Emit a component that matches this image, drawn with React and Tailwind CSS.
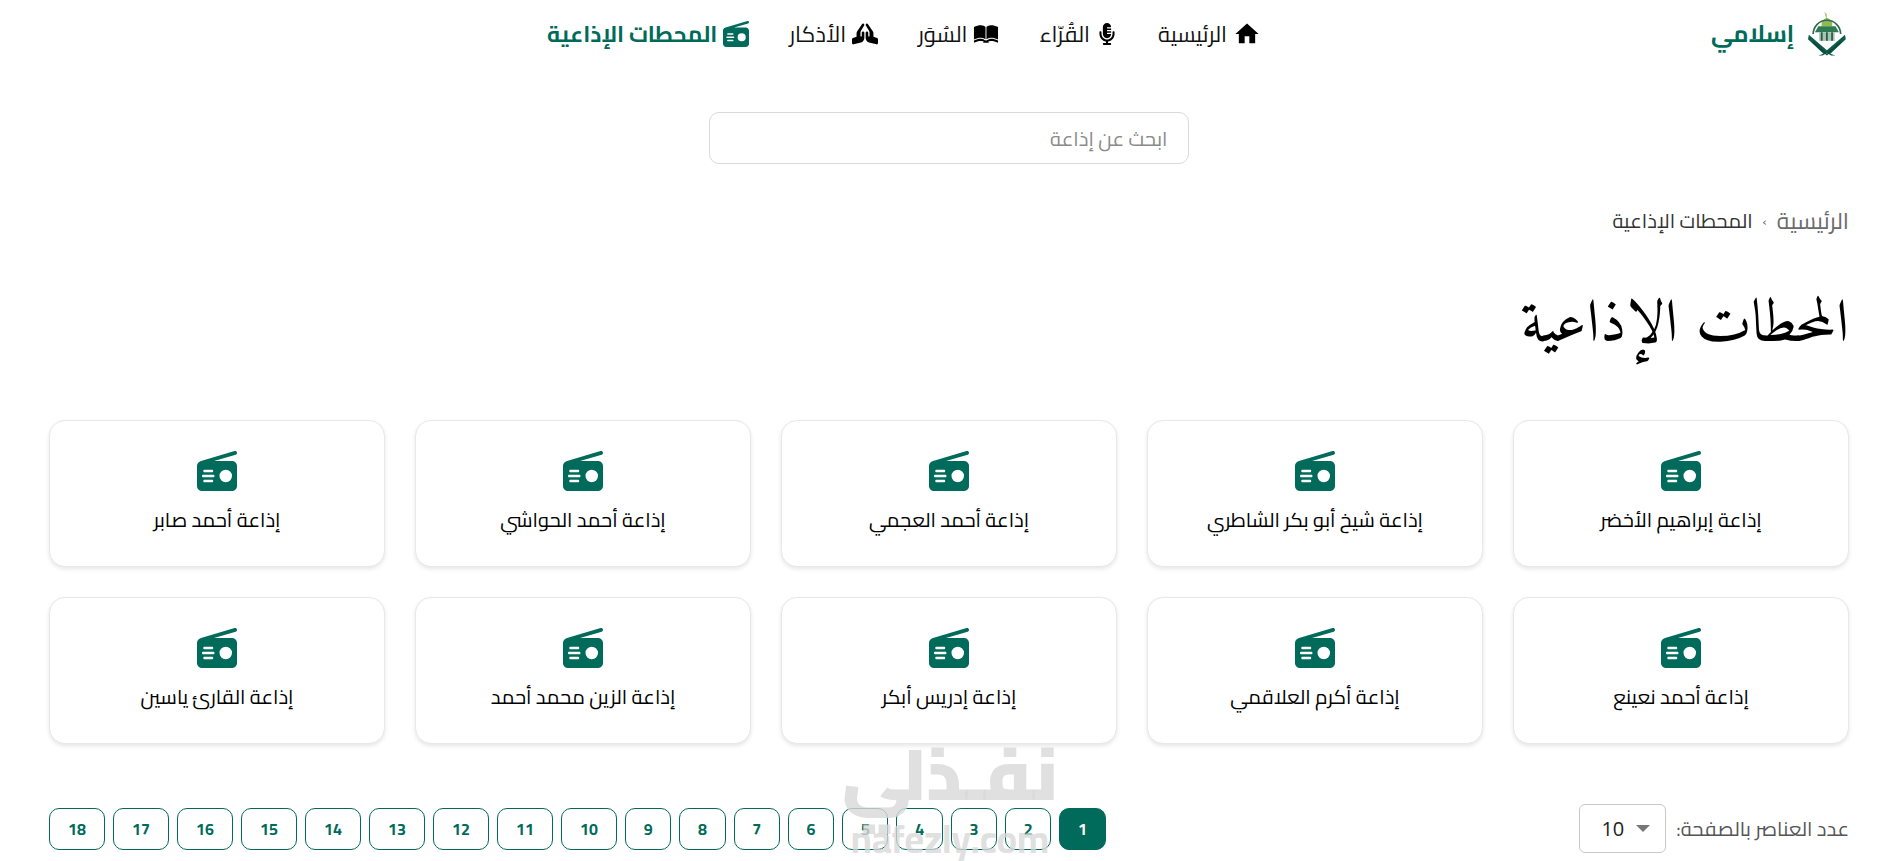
import React from "react";
import { FaMicrophoneAlt, FaPrayingHands } from "react-icons/fa";
import { FaRadio } from "react-icons/fa6";
import { MdHome } from "react-icons/md";
import { GiOpenBook } from "react-icons/gi";

const stations = [
  "إذاعة إبراهيم الأخضر",
  "إذاعة شيخ أبو بكر الشاطري",
  "إذاعة أحمد العجمي",
  "إذاعة أحمد الحواشي",
  "إذاعة أحمد صابر",
  "إذاعة أحمد نعينع",
  "إذاعة أكرم العلاقمي",
  "إذاعة إدريس أبكر",
  "إذاعة الزين محمد أحمد",
  "إذاعة القارئ ياسين",
];

const pages = Array.from({ length: 18 }, (_, i) => i + 1);

const Logo = () => (
  <svg width="46" height="54" viewBox="0 0 44 52">
    {/* finial and dome */}
    <path d="M19 0l3 3 0 5-1 0z" fill="#a9c98a" />
    <path d="M22 7c5 2 7 6 6 10H16c-1-4 1-8 6-10z" fill="#8dbb4f" />
    {/* arch */}
    <path d="M6 26a16 16 0 0 1 32 0" fill="none" stroke="#2f6b4f" strokeWidth="2" />
    {/* mosque */}
    <path d="M12 17h20l4 7H8z" fill="#2f7a55" />
    <path d="M13 24h18v10H13z" fill="#a8c4b0" />
    <path d="M15 24h2v10h-2zM21 24h2v10h-2zM27 24h2v10h-2z" fill="#1f5c45" />
    {/* open book */}
    <path d="M1 27l21 18 21-18 1 5-18 17 6 2h-5l-5-3-5 3H12l6-2L0 32z" fill="#0f5a48" />
    <path d="M6 34l16 15 16-15v3L22 51 6 37z" fill="#0b4a3b" />
  </svg>
);

const NavItem = ({ icon: Icon, label, active, size = 22 }) => (
  <a className={`flex items-center gap-[6px] leading-none ${active ? "text-[22.5px] font-bold text-[#006b5a]" : "text-[22px] text-[#111]"}`}>
    <Icon size={size} className={active ? "text-[#006b5a]" : "text-black"} />
    <span>{label}</span>
  </a>
);

const StationCard = ({ name }) => (
  <div className="h-[147px] bg-white border border-[#e8e8e8] rounded-2xl shadow-[0_2px_4px_rgba(0,0,0,0.1)] flex flex-col items-center pt-[30px]">
    <FaRadio size={40} className="text-[#006b5a]" />
    <div className="mt-[14px] text-[20px] leading-[30px] text-black">{name}</div>
  </div>
);

const PageButton = ({ n }) => (
  <button
    className={`h-[42px] rounded-[10px] border border-[#006b5a] font-bold text-[16px] ${n > 9 ? "w-[56px]" : "w-[46.3px]"} ${
      n === 1 ? "bg-[#006b5a] text-white" : "bg-white text-[#006b5a]"
    }`}
  >
    {n}
  </button>
);

export default function App() {
  return (
    <div dir="rtl" className="relative h-[861px] overflow-hidden bg-white font-['Cairo','Noto_Sans',sans-serif]">

      {/* Navbar */}
      <nav className="h-[68px] flex items-center pr-[51px] pl-[49px]">
        <div className="flex items-center gap-[14px] w-[135px]">
          <Logo />
          <span className="text-[23.5px] font-bold text-[#006b5a]">إسلامي</span>
        </div>
        <div className="flex items-center gap-[40px] mr-[450px]">
          <NavItem icon={MdHome} label="الرئيسية" size={28} />
          <NavItem icon={FaMicrophoneAlt} label="القُرّاء" />
          <NavItem icon={GiOpenBook} label="السُوَر" size={26} />
          <NavItem icon={FaPrayingHands} label="الأذكار" size={26} />
          <NavItem icon={FaRadio} label="المحطات الإذاعية" active size={26} />
        </div>
      </nav>

      {/* Search */}
      <div className="flex justify-center mt-[44px]">
        <input
          placeholder="ابحث عن إذاعة"
          className="w-[480px] h-[52px] border border-[#d9d9d9] rounded-[10px] px-5 text-[20px] placeholder:text-[#8a8a8a] outline-none"
        />
      </div>

      <div className="pr-[48px] pl-[49px]">
        {/* Breadcrumb */}
        <div className="mt-[43px] h-[28px] flex items-center gap-[10px] text-[20px] text-[#6b6b6b]">
          <span className="text-[23px]">الرئيسية</span>
          <span className="text-[14px]">›</span>
          <span className="text-[#333]">المحطات الإذاعية</span>
        </div>

        {/* Title */}
        <h1 className="mt-[37px] h-[110px] text-[60px] leading-[110px] font-normal text-black font-['Amiri','Liberation_Serif',serif]">
          المحطات الإذاعية
        </h1>

        {/* Grid */}
        <div className="mt-[38px] grid grid-cols-5 gap-[30px]">
          {stations.map((s) => (
            <StationCard key={s} name={s} />
          ))}
        </div>

        {/* Footer */}
        <div className="mt-[60px] flex items-center justify-between">
          <div className="flex items-center gap-[10px] text-[20px] text-[#555]">
            <span>عدد العناصر بالصفحة:</span>
            <div className="w-[87px] h-[49px] border border-[#c8c8c8] rounded-md flex items-center gap-3 pr-[15px] text-[#222]">
              <span className="w-0 h-0 border-x-[7px] border-x-transparent border-t-[7px] border-t-[#777]"></span>
              <span className="font-['Open_Sans',sans-serif]">10</span>
            </div>
          </div>
          <div className="flex items-center gap-[8px]">
            {pages.map((n) => (
              <PageButton key={n} n={n} />
            ))}
          </div>
        </div>
      </div>

      {/* Watermark */}
      <div className="absolute left-[830px] top-[738px] w-[240px] text-center text-[72px] leading-none font-black text-[#d8d8d8]/80 pointer-events-none">
        نفـذلي
      </div>
      <div dir="ltr" className="absolute left-[835px] top-[820px] w-[230px] text-center text-[38px] leading-none font-bold text-[#d8d8d8]/80 pointer-events-none">
        nafezly.com
      </div>
    </div>
  );
}
